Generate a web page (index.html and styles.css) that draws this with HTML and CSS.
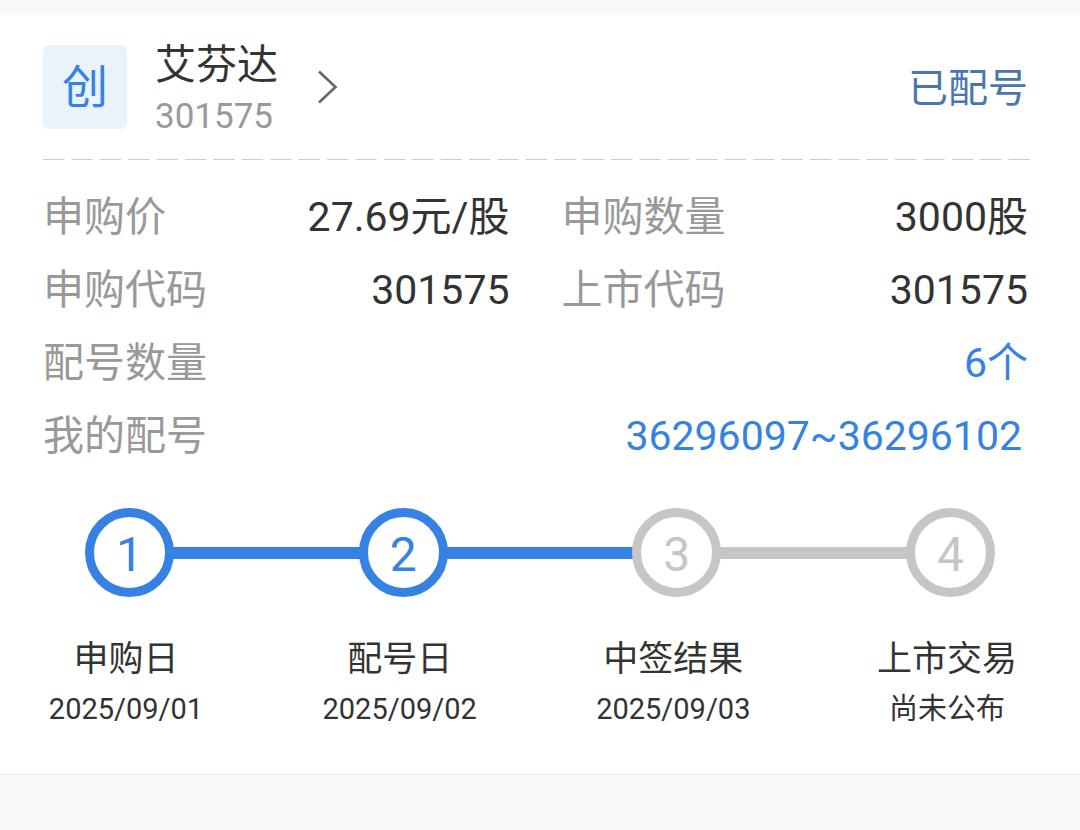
FILE: index.html
```html
<!DOCTYPE html>
<html lang="zh-CN">
<head>
<meta charset="utf-8">
<meta name="viewport" content="width=device-width, initial-scale=1">
<title>艾芬达 301575</title>
<link rel="stylesheet" href="styles.css">
</head>
<body>
<main class="card">
  <header class="head">
    <a class="stock" href="#">
      <span class="badge">创</span>
      <span class="names">
        <span class="name">艾芬达</span>
        <span class="code">301575</span>
      </span>
      <svg class="chevron" width="20" height="34" viewBox="0 0 20 34" aria-hidden="true"><path d="M1 1.5 17.500 17 1 32.500" fill="none" stroke="#666" stroke-width="2.600"/></svg>
    </a>
    <span class="status">已配号</span>
  </header>
  <svg class="divider" height="1" aria-hidden="true"><line x1="0" y1="0.5" x2="100%" y2="0.5" pathLength="278" stroke="#ccc" stroke-width="1" stroke-dasharray="6 2"/></svg>
  <dl class="details">
    <div class="item"><dt>申购价</dt><dd>27.69元/股</dd></div>
    <div class="item"><dt>申购数量</dt><dd>3000股</dd></div>
    <div class="item"><dt>申购代码</dt><dd>301575</dd></div>
    <div class="item"><dt>上市代码</dt><dd>301575</dd></div>
    <div class="item wide"><dt>配号数量</dt><dd class="accent">6个</dd></div>
    <div class="item wide"><dt>我的配号</dt><dd class="accent range">36296097~36296102</dd></div>
  </dl>
  <div class="rail">
    <span class="dot done">1</span>
    <span class="bar done"></span>
    <span class="dot done">2</span>
    <span class="bar done"></span>
    <span class="dot">3</span>
    <span class="bar"></span>
    <span class="dot">4</span>
  </div>
  <ol class="steps">
    <li class="step"><span class="label">申购日</span><span class="date">2025/09/01</span></li>
    <li class="step"><span class="label">配号日</span><span class="date">2025/09/02</span></li>
    <li class="step"><span class="label">中签结果</span><span class="date">2025/09/03</span></li>
    <li class="step"><span class="label">上市交易</span><span class="date">尚未公布</span></li>
  </ol>
</main>
</body>
</html>
```
FILE: styles.css
```css
* { box-sizing: border-box; }

body {
  margin: 0;
  padding-top: 15px;
  background: #f7f8fa;
  color: #333;
  font-family: Roboto, "Noto Sans CJK SC", sans-serif;
  font-size: 41px;
  line-height: 52px;
}

.card {
  background: #fff;
  border-bottom: 1px solid #ebebeb;
  padding-bottom: 42px;
}

.head {
  display: flex;
  align-items: center;
  justify-content: space-between;
  padding: 16px 52px 16px 43px;
}

.stock {
  display: flex;
  align-items: center;
  color: inherit;
  text-decoration: none;
}

.badge {
  width: 84px;
  height: 84px;
  border-radius: 6px;
  background: #eaf2fc;
  color: #3582e3;
  font-size: 46px;
  line-height: 84px;
  text-align: center;
}

.names {
  display: flex;
  flex-direction: column;
  margin-left: 28px;
  padding-top: 8px;
}

.name { line-height: 52px; }

.code {
  color: #999;
  font-size: 35px;
  line-height: 52px;
}

.chevron { margin-left: 40px; }

.status {
  padding-top: 4px;
  color: #4975b0;
  font-size: 40px;
}

.divider {
  display: block;
  width: calc(100% - 93px);
  margin-left: 43px;
}

.details {
  display: grid;
  grid-template-columns: 1fr 1fr;
  column-gap: 52px;
  row-gap: 21px;
  margin: 0;
  padding: 31px 52px 0 43px;
}

.item {
  display: flex;
  justify-content: space-between;
}

.wide { grid-column: 1 / -1; }

dt { color: #999; }

dd { margin: 0; }

.accent { color: #3582e3; }

.range { padding-right: 6px; }

.rail {
  display: flex;
  align-items: center;
  padding: 46px 85px 0;
}

.dot {
  width: 89px;
  height: 89px;
  border: 9px solid #c6c6c6;
  border-radius: 50%;
  color: #c6c6c6;
  font-size: 48px;
  line-height: 76px;
  text-align: center;
}

.dot.done {
  border-color: #3582e3;
  color: #3582e3;
}

.bar {
  flex: 1;
  height: 12px;
  margin: 0 -2px;
  background: #c6c6c6;
}

.bar.done { background: #3582e3; }

.steps {
  display: flex;
  justify-content: space-between;
  margin: 0;
  padding: 37px 53px 0 46px;
  list-style: none;
}

.step {
  display: flex;
  flex-direction: column;
  align-items: center;
  width: 160px;
}

.label {
  font-size: 35px;
  line-height: 52px;
}

.date {
  font-size: 29px;
  line-height: 46px;
}
```
